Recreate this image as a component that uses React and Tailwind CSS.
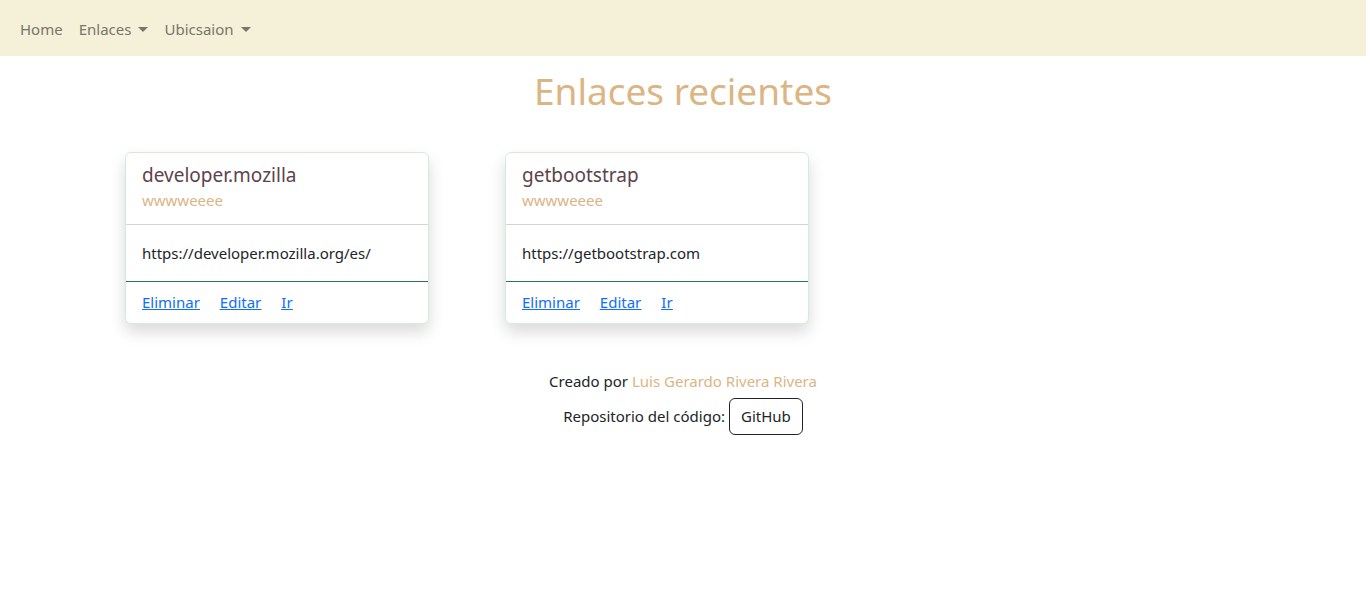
export default function App() {
  const cards = [
    { title: "developer.mozilla", sub: "wwwweeee", url: "https://developer.mozilla.org/es/" },
    { title: "getbootstrap", sub: "wwwweeee", url: "https://getbootstrap.com" },
  ];
  return (
    <div className="min-h-screen bg-white text-[#212529]" style={{ fontFamily: '"Noto Sans", sans-serif' }}>
      <nav className="h-[56px] bg-[#f5f0d8] flex items-center px-[12px] pt-[2px] text-[15px] text-[#77756c]">
        <a className="px-[8px]">Home</a>
        <a className="px-[8px] flex items-center">
          Enlaces
          <span className="ml-[7px] w-0 h-0 border-l-[5px] border-r-[5px] border-t-[5px] border-l-transparent border-r-transparent border-t-[#77756c]" />
        </a>
        <a className="px-[8px] flex items-center">
          Ubicsaion
          <span className="ml-[7px] w-0 h-0 border-l-[5px] border-r-[5px] border-t-[5px] border-l-transparent border-r-transparent border-t-[#77756c]" />
        </a>
      </nav>
      <h1 className="text-center text-[37px] leading-[48px] text-[#dbb584] mt-[11px]">Enlaces recientes</h1>
      <div className="flex gap-[76px] pl-[125px] mt-[37px]">
        {cards.map((c) => (
          <div key={c.title} className="w-[304px] border border-[#d3ecd7] rounded-[6px] bg-white shadow-[0_8px_16px_rgba(0,0,0,0.15)]">
            <div className="px-[16px] pt-[10px] pb-[15px] border-b border-[#d4d4d4]">
              <div className="text-[19px] leading-[24px] text-[#5c434c]">{c.title}</div>
              <div className="text-[15px] leading-[18px] text-[#dbb584] mt-[4px]">{c.sub}</div>
            </div>
            <div className="px-[16px] h-[57px] flex items-center text-[15px] border-b border-[#237a4f]">{c.url}</div>
            <div className="px-[16px] h-[41px] flex items-center gap-[20px] text-[15px] text-[#0d6efd] underline">
              <a>Eliminar</a>
              <a>Editar</a>
              <a>Ir</a>
            </div>
          </div>
        ))}
      </div>
      <div className="mt-[46px] flex flex-col items-center text-[15px]">
        <div>
          Creado por <span className="text-[#dbb584]">Luis Gerardo Rivera Rivera</span>
        </div>
        <div className="flex items-center mt-[5px]">
          <span>Repositorio del código:</span>
          <span className="ml-[4px] border border-[#212529] rounded-[6px] px-[11px] h-[37px] flex items-center">GitHub</span>
        </div>
      </div>
    </div>
  );
}
